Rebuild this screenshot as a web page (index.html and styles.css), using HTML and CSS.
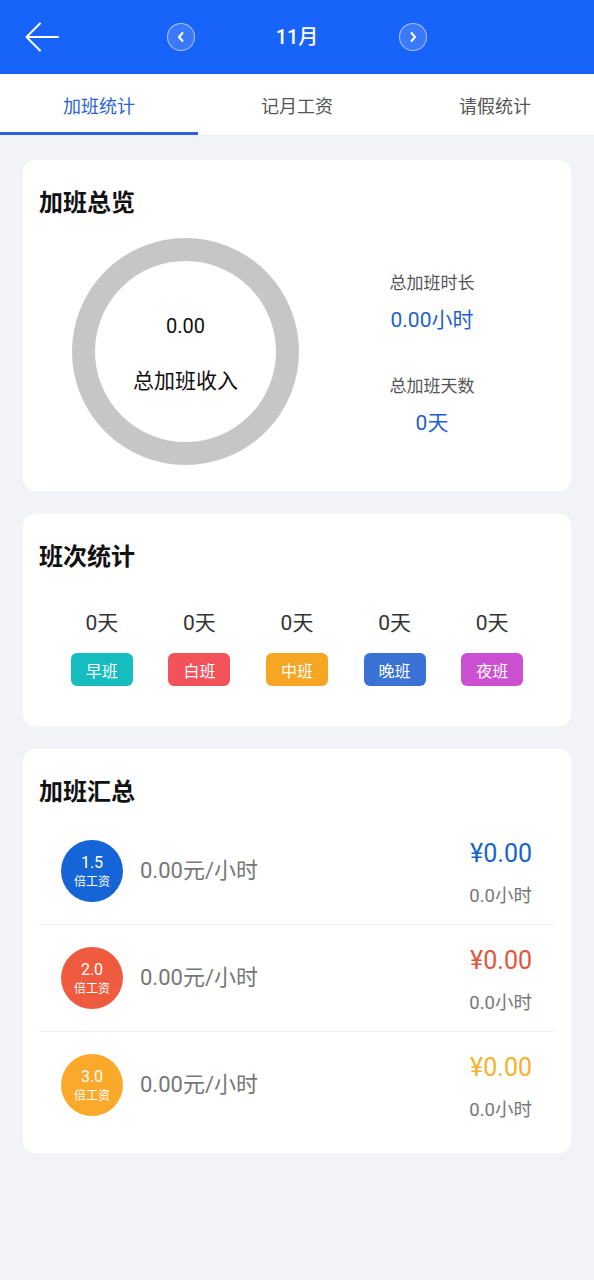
FILE: index.html
```html
<!DOCTYPE html>
<html lang="zh">
<head>
<meta charset="utf-8">
<title>加班统计</title>
<link rel="stylesheet" href="styles.css">
</head>
<body>
<header class="topbar">
  <div class="back">
    <svg width="34" height="30" viewBox="0 0 34 30"><path d="M33 15H2M15 1.5L1.5 15L15 28.5" fill="none" stroke="#fff" stroke-width="2" stroke-linecap="round" stroke-linejoin="round"/></svg>
  </div>
  <div class="month-nav">
    <span class="nav-btn"><svg width="12" height="12" viewBox="0 0 12 12"><path d="M7.5 2L4 6l3.5 4" fill="none" stroke="#fff" stroke-width="2" stroke-linecap="round" stroke-linejoin="round"/></svg></span>
    <span class="month">11月</span>
    <span class="nav-btn"><svg width="12" height="12" viewBox="0 0 12 12"><path d="M4.5 2L8 6l-3.5 4" fill="none" stroke="#fff" stroke-width="2" stroke-linecap="round" stroke-linejoin="round"/></svg></span>
  </div>
  <div></div>
</header>
<nav class="tabs">
  <div class="tab active">加班统计</div>
  <div class="tab">记月工资</div>
  <div class="tab">请假统计</div>
</nav>
<main class="content">
  <section class="card overview">
    <h2 class="card-title">加班总览</h2>
    <div class="overview-body">
      <div class="ring">
        <div class="ring-value">0.00</div>
        <div class="ring-label">总加班收入</div>
      </div>
      <div class="totals">
        <div class="total-label">总加班时长</div>
        <div class="total-value">0.00小时</div>
        <div class="total-label second">总加班天数</div>
        <div class="total-value">0天</div>
      </div>
    </div>
  </section>

  <section class="card shifts">
    <h2 class="card-title">班次统计</h2>
    <div class="shift-row">
      <div class="shift"><div class="shift-days">0天</div><div class="badge teal">早班</div></div>
      <div class="shift"><div class="shift-days">0天</div><div class="badge red">白班</div></div>
      <div class="shift"><div class="shift-days">0天</div><div class="badge orange">中班</div></div>
      <div class="shift"><div class="shift-days">0天</div><div class="badge blue">晚班</div></div>
      <div class="shift"><div class="shift-days">0天</div><div class="badge purple">夜班</div></div>
    </div>
  </section>

  <section class="card summary">
    <h2 class="card-title">加班汇总</h2>
    <div class="sum-row">
      <div class="rate-circle c-blue"><span class="rate-num">1.5</span><span class="rate-unit">倍工资</span></div>
      <div class="rate-text">0.00元/小时</div>
      <div class="sum-right"><div class="amount a-blue">¥0.00</div><div class="hours">0.0小时</div></div>
    </div>
    <div class="sum-row">
      <div class="rate-circle c-red"><span class="rate-num">2.0</span><span class="rate-unit">倍工资</span></div>
      <div class="rate-text">0.00元/小时</div>
      <div class="sum-right"><div class="amount a-red">¥0.00</div><div class="hours">0.0小时</div></div>
    </div>
    <div class="sum-row">
      <div class="rate-circle c-orange"><span class="rate-num">3.0</span><span class="rate-unit">倍工资</span></div>
      <div class="rate-text">0.00元/小时</div>
      <div class="sum-right"><div class="amount a-orange">¥0.00</div><div class="hours">0.0小时</div></div>
    </div>
  </section>
</main>
</body>
</html>
```

FILE: styles.css
```css
* { box-sizing: border-box; }
html, body { margin: 0; padding: 0; }
body {
  width: 594px;
  min-height: 1280px;
  background: #f2f3f7;
  font-family: Roboto, "Noto Sans CJK SC", sans-serif;
  color: #222;
}
.topbar {
  height: 74px;
  background: #1863fa;
  display: grid;
  grid-template-columns: 1fr auto 1fr;
  align-items: center;
}
.back {
  padding-left: 25px;
  display: flex;
  align-items: center;
}
.month-nav {
  display: flex;
  align-items: center;
  gap: 81px;
}
.nav-btn {
  width: 28px;
  height: 28px;
  border-radius: 50%;
  border: 1px solid rgba(255,255,255,0.55);
  background: rgba(255,255,255,0.15);
  display: flex;
  align-items: center;
  justify-content: center;
}
.month {
  color: #fff;
  font-size: 20px;
  line-height: 28px;
  font-weight: 500;
}
.tabs {
  height: 62px;
  background: #fff;
  display: flex;
  border-bottom: 1px solid #eceef2;
}
.tab {
  flex: 1;
  display: flex;
  align-items: center;
  justify-content: center;
  font-size: 18px;
  color: #555;
  border-bottom: 3px solid transparent;
  padding-top: 3px;
}
.tab.active {
  color: #2b63d6;
  border-bottom-color: #2b63d9;
}
.content {
  padding: 24px 23px 0;
  display: flex;
  flex-direction: column;
  gap: 23px;
}
.card {
  background: #fff;
  border-radius: 12px;
  padding: 27px 16px 0;
}
.card-title {
  margin: 0;
  font-size: 24px;
  line-height: 32px;
  font-weight: 700;
  color: #111;
}
.overview { padding-bottom: 26px; }
.overview-body {
  display: flex;
  align-items: center;
  margin-top: 19px;
}
.ring {
  width: 227px;
  height: 227px;
  border-radius: 50%;
  border: 23px solid #c6c6c6;
  margin-left: 33px;
  display: flex;
  flex-direction: column;
  align-items: center;
  justify-content: center;
  gap: 27px;
  padding-top: 3px;
}
.ring-value {
  font-size: 20px;
  line-height: 28px;
  color: #111;
}
.ring-label {
  font-size: 21px;
  line-height: 28px;
  color: #111;
}
.totals {
  flex: 1;
  display: flex;
  flex-direction: column;
  align-items: center;
  padding-left: 10px;
  padding-top: 6px;
}
.total-label {
  font-size: 17px;
  line-height: 22px;
  color: #555;
}
.total-label.second { margin-top: 41px; }
.total-value {
  margin-top: 12px;
  font-size: 21px;
  line-height: 28px;
  color: #1f5fd1;
}
.shifts { padding-bottom: 40px; }
.shift-row {
  display: grid;
  grid-template-columns: repeat(5, 1fr);
  margin: 36px 14px 0;
}
.shift {
  display: flex;
  flex-direction: column;
  align-items: center;
  gap: 16px;
}
.shift-days {
  font-size: 21px;
  line-height: 28px;
  color: #333;
}
.badge {
  width: 62px;
  height: 33px;
  border-radius: 6px;
  color: #fff;
  font-size: 16px;
  display: flex;
  align-items: center;
  justify-content: center;
}
.teal { background: #16bdbf; }
.red { background: #f2535a; }
.orange { background: #f5a623; }
.blue { background: #3a72d6; }
.purple { background: #cb4fd0; }
.summary { padding-bottom: 15px; }
.summary .card-title { margin-bottom: 10px; }
.sum-row {
  height: 107px;
  display: flex;
  align-items: center;
  padding: 0 23px 0 22px;
  border-top: 1px solid #eef0f3;
}
.sum-row:first-of-type { border-top: none; height: 106px; }
.rate-circle {
  width: 62px;
  height: 62px;
  border-radius: 50%;
  display: flex;
  flex-direction: column;
  align-items: center;
  justify-content: center;
  color: #fff;
  flex-shrink: 0;
}
.rate-num { font-size: 16px; line-height: 19px; }
.rate-unit { font-size: 12px; line-height: 16px; margin-top: 2px; }
.c-blue { background: #1565d6; }
.c-red { background: #ef5b3f; }
.c-orange { background: #fba92a; }
.rate-text {
  flex: 1;
  margin-left: 17px;
  font-size: 22px;
  line-height: 28px;
  color: #777;
}
.sum-right {
  display: flex;
  flex-direction: column;
  align-items: flex-end;
  gap: 13px;
  margin-top: 4px;
}
.amount { font-size: 25px; line-height: 32px; }
.hours { font-size: 18.5px; line-height: 26px; color: #777; }
.a-blue { color: #1565c4; }
.a-red { color: #e2553c; }
.a-orange { color: #f6b12a; }
```
